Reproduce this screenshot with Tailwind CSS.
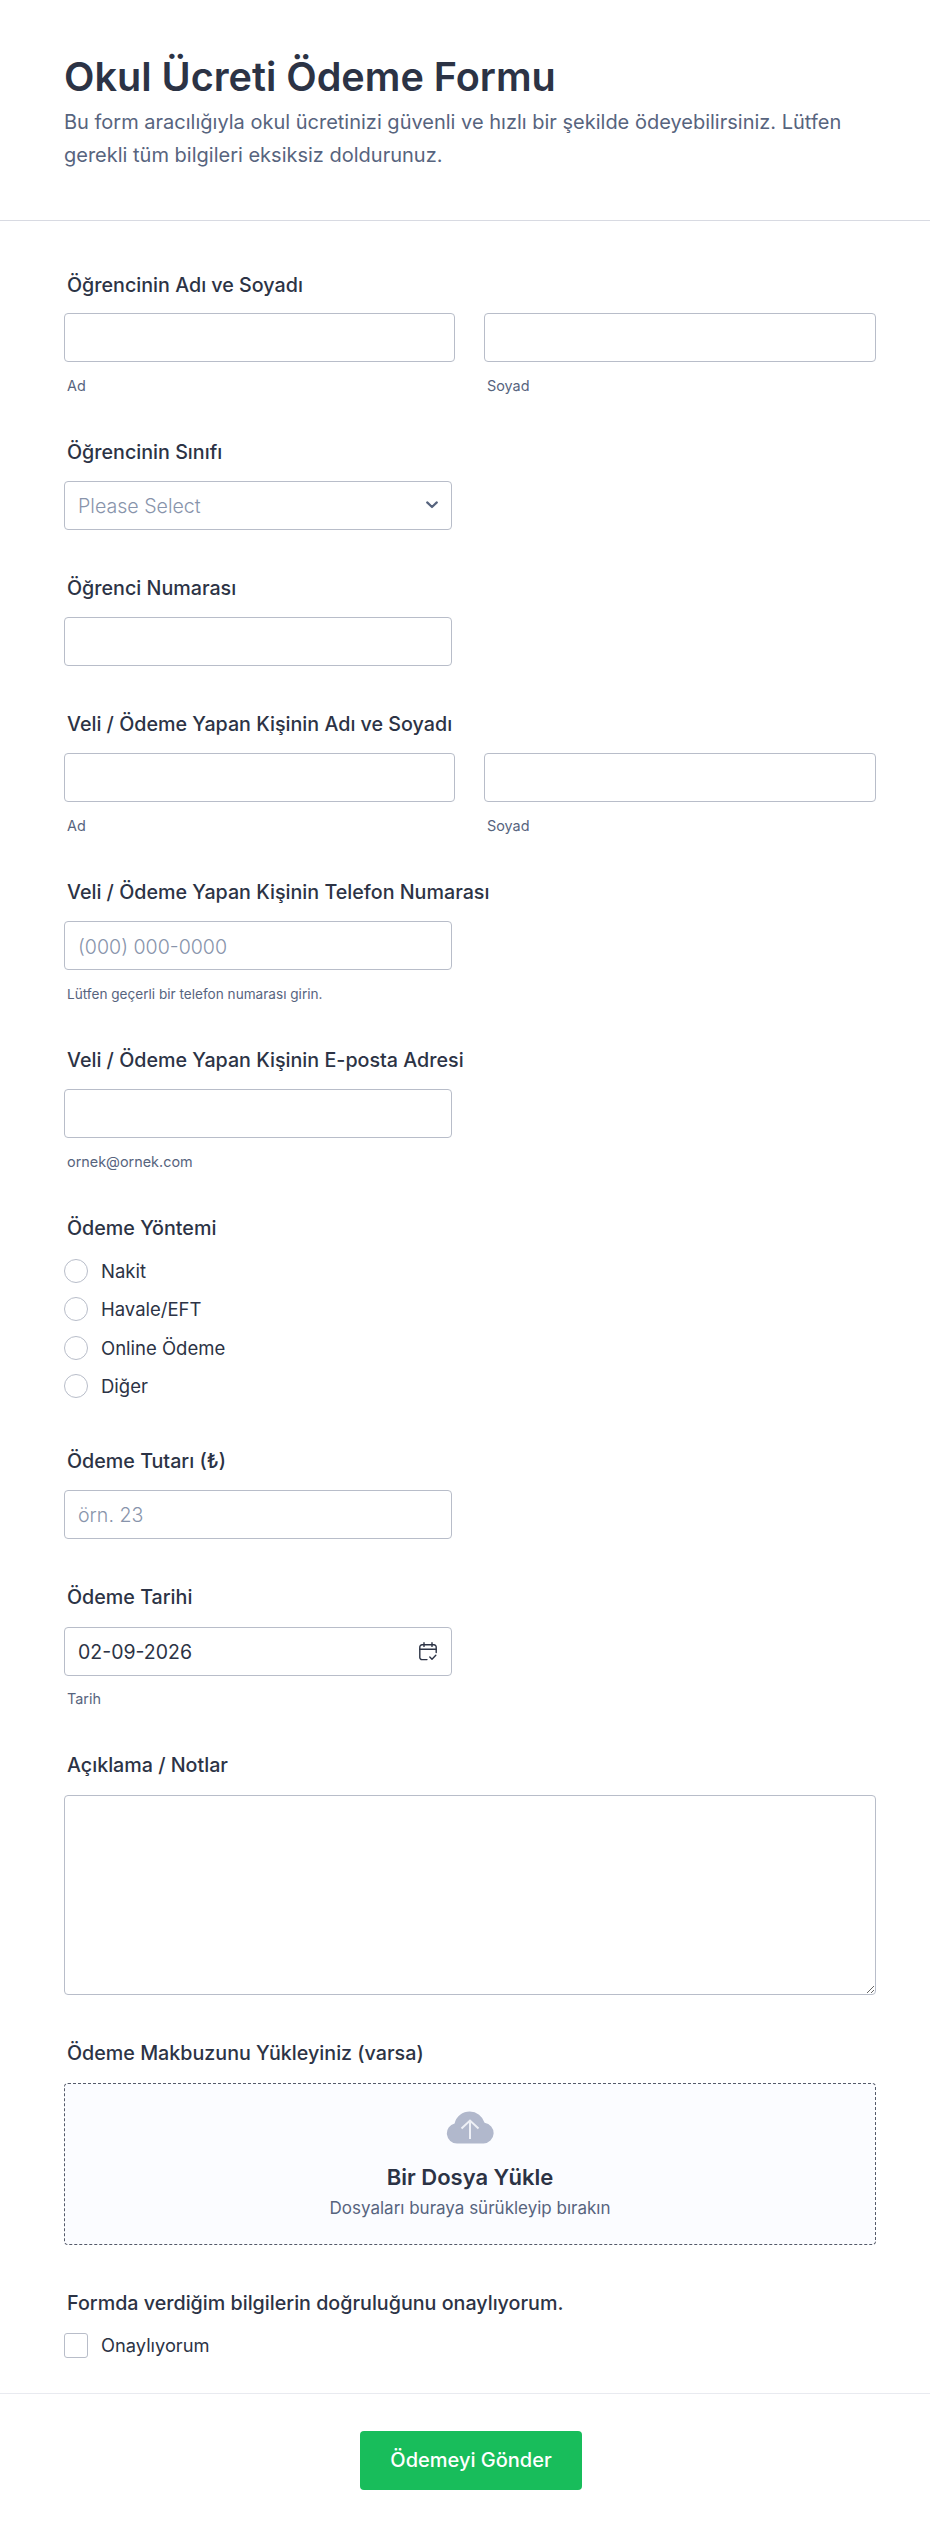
<!DOCTYPE html>
<html lang="tr">
<head>
<meta charset="utf-8">
<script src="https://cdn.jsdelivr.net/npm/@tailwindcss/browser@4"></script>
<title>Okul Ücreti Ödeme Formu</title>
</head>
<body class="bg-white font-['Inter',sans-serif] text-[#2c3345]">
<div class="w-[930px] h-[2540px] bg-white">
  <header class="h-[221px] border-b border-[#d8dae2] pl-[64px] pr-[54px] pt-[50px]">
    <h1 class="text-[39.6px] leading-[54px] font-semibold">Okul Ücreti Ödeme Formu</h1>
    <p class="mt-[2px] text-[20px] leading-[33px] text-[#57647e]">Bu form aracılığıyla okul ücretinizi güvenli ve hızlı bir şekilde ödeyebilirsiniz. Lütfen gerekli tüm bilgileri eksiksiz doldurunuz.</p>
  </header>

  <main class="pl-[64px] pr-[54px] pt-[50px] flex flex-col gap-[44px]">
    <section>
      <h2 class="pl-[3px] h-[28px] leading-[28px] text-[19.7px] font-[450] mb-[14px]">Öğrencinin Adı ve Soyadı</h2>
      <div class="flex gap-[29px]">
        <div class="w-[391px]"><input class="block w-full h-[49px] bg-white border border-[#b8bdc9] rounded-[4px]"><p class="pl-[3px] pt-[15px] h-[32px] text-[14.4px] leading-[18px] text-[#57647e]">Ad</p></div>
        <div class="w-[392px]"><input class="block w-full h-[49px] bg-white border border-[#b8bdc9] rounded-[4px]"><p class="pl-[3px] pt-[15px] h-[32px] text-[14.4px] leading-[18px] text-[#57647e]">Soyad</p></div>
      </div>
    </section>

    <section>
      <h2 class="pl-[3px] h-[28px] leading-[28px] text-[19.7px] font-[450] mb-[15px]">Öğrencinin Sınıfı</h2>
      <div class="w-[388px] h-[49px] border border-[#b8bdc9] rounded-[4px] pl-[13px] pr-[13px] flex items-center justify-between">
        <span class="pt-[2px] text-[19.6px] font-light text-[#8894ab]">Please Select</span>
        <svg width="12" height="8" viewBox="0 0 12 8" fill="none" class="mt-[-1px]"><path d="M1.2 1.4 6 6 10.800 1.400" stroke="#57647e" stroke-width="2.200" stroke-linecap="round" stroke-linejoin="round"/></svg>
      </div>
    </section>

    <section>
      <h2 class="pl-[3px] h-[28px] leading-[28px] text-[19.7px] font-[450] mb-[15px]">Öğrenci Numarası</h2>
      <input class="block w-[388px] h-[49px] bg-white border border-[#b8bdc9] rounded-[4px]">
    </section>

    <section>
      <h2 class="pl-[3px] h-[28px] leading-[28px] text-[19.7px] font-[450] mb-[15px]">Veli / Ödeme Yapan Kişinin Adı ve Soyadı</h2>
      <div class="flex gap-[29px]">
        <div class="w-[391px]"><input class="block w-full h-[49px] bg-white border border-[#b8bdc9] rounded-[4px]"><p class="pl-[3px] pt-[15px] h-[32px] text-[14.4px] leading-[18px] text-[#57647e]">Ad</p></div>
        <div class="w-[392px]"><input class="block w-full h-[49px] bg-white border border-[#b8bdc9] rounded-[4px]"><p class="pl-[3px] pt-[15px] h-[32px] text-[14.4px] leading-[18px] text-[#57647e]">Soyad</p></div>
      </div>
    </section>

    <section>
      <h2 class="pl-[3px] h-[28px] leading-[28px] text-[19.7px] font-[450] mb-[15px]">Veli / Ödeme Yapan Kişinin Telefon Numarası</h2>
      <input placeholder="(000) 000-0000" class="block w-[388px] h-[49px] bg-white border border-[#b8bdc9] rounded-[4px] px-[13px] pt-[2px] text-[19.6px] font-light placeholder:text-[#8894ab]">
      <p class="pl-[3px] pt-[15px] h-[32px] text-[13.6px] leading-[18px] text-[#57647e]">Lütfen geçerli bir telefon numarası girin.</p>
    </section>

    <section>
      <h2 class="pl-[3px] h-[28px] leading-[28px] text-[19.7px] font-[450] mb-[15px]">Veli / Ödeme Yapan Kişinin E-posta Adresi</h2>
      <input class="block w-[388px] h-[49px] bg-white border border-[#b8bdc9] rounded-[4px]">
      <p class="pl-[3px] pt-[15px] h-[32px] text-[14.4px] leading-[18px] text-[#57647e]">ornek@ornek.com</p>
    </section>

    <section>
      <h2 class="pl-[3px] h-[28px] leading-[28px] text-[19.7px] font-[450] mb-[17px]">Ödeme Yöntemi</h2>
      <div class="flex flex-col gap-[14.33px] mb-[5px]">
        <label class="flex items-center gap-[13px] text-[18.500px] leading-[24px]"><span class="w-[24px] h-[24px] rounded-full border border-[#b8bdc9]"></span>Nakit</label>
        <label class="flex items-center gap-[13px] text-[18.500px] leading-[24px]"><span class="w-[24px] h-[24px] rounded-full border border-[#b8bdc9]"></span>Havale/EFT</label>
        <label class="flex items-center gap-[13px] text-[18.500px] leading-[24px]"><span class="w-[24px] h-[24px] rounded-full border border-[#b8bdc9]"></span>Online Ödeme</label>
        <label class="flex items-center gap-[13px] text-[18.500px] leading-[24px]"><span class="w-[24px] h-[24px] rounded-full border border-[#b8bdc9]"></span>Diğer</label>
      </div>
    </section>

    <section>
      <h2 class="pl-[3px] h-[28px] leading-[28px] text-[19.7px] font-[450] mb-[15px]">Ödeme Tutarı (₺)</h2>
      <input placeholder="örn. 23" class="block w-[388px] h-[49px] bg-white border border-[#b8bdc9] rounded-[4px] px-[13px] pt-[2px] text-[19.6px] font-light placeholder:text-[#8894ab]">
    </section>

    <section>
      <h2 class="pl-[3px] h-[28px] leading-[28px] text-[19.7px] font-[450] mb-[16px]">Ödeme Tarihi</h2>
      <div class="w-[388px] h-[49px] border border-[#b8bdc9] rounded-[4px] pl-[13px] pr-[14px] flex items-center justify-between">
        <span class="pt-[2px] text-[19.5px]">02-09-2026</span>
        <svg width="18" height="19" viewBox="0 0 18 19" fill="none" stroke="#2c3345" stroke-width="1.4" stroke-linecap="round" stroke-linejoin="round"><path d="M8 17.6H3A2.2 2.2 0 0 1 .8 15.4V5A2.2 2.2 0 0 1 3 2.8h12A2.2 2.2 0 0 1 17.2 5v5.5"/><path d="M.8 7.2h16.4M5 .8v3.6M13 .8v3.6"/><path d="m10.8 15 2.2 2.2 3.8-4"/></svg>
      </div>
      <p class="pl-[3px] pt-[14px] h-[31px] text-[14.4px] leading-[18px] text-[#57647e]">Tarih</p>
    </section>

    <section>
      <h2 class="pl-[3px] h-[28px] leading-[28px] text-[19.7px] font-[450] mb-[16px]">Açıklama / Notlar</h2>
      <textarea class="block w-full h-[200px] bg-white border border-[#b8bdc9] rounded-[4px]"></textarea>
    </section>

    <section>
      <h2 class="pl-[3px] h-[28px] leading-[28px] text-[19.7px] font-[450] mb-[16px]">Ödeme Makbuzunu Yükleyiniz (varsa)</h2>
      <div class="h-[162px] border border-dashed border-[#2c3345]/80 rounded-[4px] bg-[#fbfcff] flex flex-col items-center pt-[27px]">
        <svg width="48" height="33" viewBox="0 0 48 33" fill="none"><path d="M11 32.5A10.2 10.2 0 0 1 8.6 12.4 15.6 15.6 0 0 1 23.8.5 15.8 15.8 0 0 1 38.600 11.800 10.400 10.400 0 0 1 37.500 32.500Z" fill="#b1b8cc"/><path d="M24 28V10M15.500 17.500 24 9.500l8.500 8" stroke="#eef0f6" stroke-width="2"/></svg>
        <p class="mt-[19px] text-[22px] leading-[28px] font-semibold">Bir Dosya Yükle</p>
        <p class="mt-[5px] text-[17px] leading-[24px] text-[#57647e]">Dosyaları buraya sürükleyip bırakın</p>
      </div>
    </section>

    <section>
      <h2 class="pl-[3px] h-[28px] leading-[28px] text-[19.7px] font-[450] mb-[16px]">Formda verdiğim bilgilerin doğruluğunu onaylıyorum.</h2>
      <label class="flex items-center gap-[13px] text-[18.300px] leading-[24px]"><span class="w-[24px] h-[25px] rounded-[3px] border border-[#b8bdc9]"></span>Onaylıyorum</label>
    </section>
  </main>

  <footer class="mt-[35px] border-t border-[#e8eaf0] pl-[12px] pt-[37px] flex justify-center">
    <button class="w-[222px] h-[59px] rounded-[4px] bg-[#18bd5b] text-white text-[20px] font-medium">Ödemeyi Gönder</button>
  </footer>
</div>
</body>
</html>
